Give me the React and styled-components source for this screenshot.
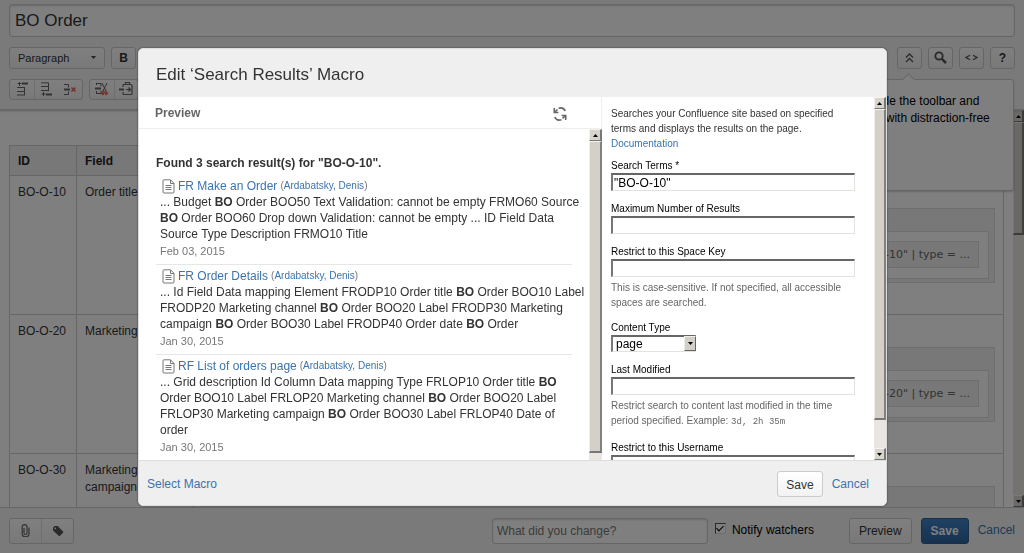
import styled, { createGlobalStyle } from 'styled-components'

const GlobalStyle = createGlobalStyle`
* { box-sizing: border-box; }
body {
  margin: 0;
  overflow: hidden;
  font-family: "Liberation Sans", Arial, sans-serif;
  font-size: 12px;
  line-height: 17px;
  color: #333;
}
button, input, select { font-family: inherit; font-size: 12px; color: inherit; }
`

/* ---------- shared ---------- */

const Link = styled.a`
color: #3b73af;
text-decoration: none;
`

const Button = styled.button`
height: 26px;
padding: 1px ${props => props.$pad || 9}px 0;
border: 1px solid ${props => props.$primary ? "#2e5f94" : "#ccc"};
border-radius: 3px;
background: ${props => props.$primary ? "linear-gradient(#4183c8, #2d64a0)" : "linear-gradient(#fff, #f2f2f2)"};
color: ${props => props.$primary ? "#fff" : "#333"};
font-weight: ${props => props.$primary ? "bold" : "normal"};
`

const ScrollTrack = styled.div`
width: ${props => props.$width}px;
flex: none;
display: flex;
flex-direction: column;
background-color: #e9e6e1;
`
const ScrollArrow = styled.div`
height: 12px;
flex: none;
display: flex;
align-items: center;
justify-content: center;
background-color: #d8d4cc;
border: 1px solid #f4f2ee;
border-right: 2px solid #777;
border-bottom: 1px solid #777;
`
const ScrollThumb = styled.div`
flex: ${props => props.$grow} 0 0;
background-color: #d4d0c8;
border-left: 1px solid #f0eeea;
border-right: 2px solid #808080;
border-top: 1px solid #f4f2ee;
border-bottom: 2px solid #777;
`
const ScrollRest = styled.div`
flex: ${props => props.$grow} 0 0;
`

const Scroll = ({ width, thumb, rest, noEnd }) => (
  <ScrollTrack $width={width} aria-hidden="true">
    <ScrollArrow>
      <svg width="5" height="3"><path d="M0 3L2.5 0L5 3z" fill="#000" /></svg>
    </ScrollArrow>
    <ScrollThumb $grow={thumb} />
    <ScrollRest $grow={rest} />
    {!noEnd && (
      <ScrollArrow>
        <svg width="5" height="3"><path d="M0 0L2.5 3L5 0z" fill="#000" /></svg>
      </ScrollArrow>
    )}
  </ScrollTrack>
)

/* ---------- editor page ---------- */

const Page = styled.div`
height: 100vh;
display: flex;
flex-direction: column;
background-color: #fff;
`
const Header = styled.header`
position: relative;
z-index: 1;
flex: none;
display: flex;
flex-direction: column;
gap: 10px;
height: 110px;
padding: 4px 9px 9px;
background-color: #f5f5f5;
border-bottom: 1px solid #ccc;
box-shadow: 0 1px 2px rgba(0, 0, 0, 0.25);
`
const TitleInput = styled.input`
width: 100%;
height: 34px;
padding: 0 5px;
border: 1px solid #ccc;
border-radius: 3px;
background-color: #fff;
box-shadow: inset 0 1px 2px rgba(0, 0, 0, 0.2);
font-size: 17px;
`
const ToolRow = styled.div`
display: flex;
gap: 6px;
height: 22px;
`
const Spacer = styled.div`
flex: 1;
`
const ToolGroup = styled.div`
display: flex;
border: 1px solid #ccc;
border-radius: 3px;
background: linear-gradient(#fff, #f2f2f2);
`
const Tool = styled.button`
width: ${props => props.$width || 24}px;
padding: 0;
border: 0;
border-left: ${props => props.$split ? "1px solid #ddd" : "0"};
background: none;
display: flex;
align-items: center;
justify-content: center;
font-weight: ${props => props.$bold ? "bold" : "normal"};
`
const StyleTool = styled(Tool)`
padding: 0 8px;
justify-content: space-between;
font-size: 11px;
`

const Hint = styled.div`
position: absolute;
top: 79px;
right: 10px;
width: 208px;
height: 112px;
padding: 13px 20px;
border: 1px solid #ccc;
border-radius: 3px;
background-color: #fff;
box-shadow: 0 1px 2px rgba(0, 0, 0, 0.2);
color: #000;
white-space: nowrap;

&::before {
  content: "";
  position: absolute;
  top: -5px;
  right: 100px;
  width: 8px;
  height: 8px;
  background-color: #fff;
  border-top: 1px solid #ccc;
  border-left: 1px solid #ccc;
  transform: rotate(45deg);
}
`

const Body = styled.div`
flex: 1;
min-height: 0;
display: flex;
`
const Document = styled.div`
flex: 1;
overflow: hidden;
padding: 35px 9px 0 9px;
`
const Table = styled.table`
width: 100%;
border-collapse: collapse;
table-layout: fixed;
`
const Th = styled.th`
width: ${props => props.$width || "auto"};
height: 30px;
padding: 7px 8px 5px;
text-align: left;
background-color: #f0f0f0;
border: 1px solid #ccc;
color: #222;
`
const Td = styled.td`
height: 139px;
padding: 8px 8px 7px;
vertical-align: top;
border: 1px solid #ccc;
`
const Macro = styled.div`
margin-top: 24px;
padding: 22px 5px 3px;
height: 75px;
background-color: #f0f0f0;
border: 1px solid #ddd;
`
const MacroBody = styled.div`
height: 48px;
padding: 9px;
background-color: #fff;
border: 1px solid #ddd;
`
const Placeholder = styled.div`
height: 27px;
padding: 0 8px;
line-height: 25px;
text-align: right;
font-family: "DejaVu Sans", sans-serif;
font-size: 11px;
color: #666;
background-color: #f0f0f0;
border: 1px solid #ddd;
`

const Footer = styled.footer`
flex: none;
height: 46px;
display: flex;
align-items: center;
padding: 0 9px;
background-color: #f5f5f5;
border-top: 1px solid #ccc;
`
const FooterGroup = styled(ToolGroup)`
height: 26px;
`
const Comment = styled.input`
width: 216px;
height: 26px;
padding: 0 4px;
border: 1px solid #ccc;
border-radius: 3px;
background-color: #fff;
box-shadow: inset 0 1px 2px rgba(0, 0, 0, 0.15);
&::placeholder { color: #777; }
`
const Watch = styled.label`
display: flex;
align-items: center;
gap: 6px;
margin: 0 35px 0 7px;
color: #000;
`
const Tick = styled.input`
appearance: none;
width: 11px;
height: 11px;
margin: 0 0 4px;
border: 1px solid #ddd;
border-top-color: #555;
border-left-color: #555;
background: #fff;
display: flex;
align-items: center;
justify-content: center;
&:checked::before {
  content: "";
  width: 3px;
  height: 6px;
  margin-bottom: 2px;
  border: solid #000;
  border-width: 0 1px 1px 0;
  transform: rotate(45deg);
}
`
const FooterActions = styled.div`
display: flex;
align-items: center;
gap: 9px;
`

/* ---------- dialog ---------- */

const Blanket = styled.div`
position: fixed;
inset: 0;
z-index: 10;
display: flex;
padding: 48px 137px 47px 138px;
background-color: rgba(0, 0, 0, 0.5);
`
const Dialog = styled.section`
flex: 1;
min-width: 0;
display: flex;
flex-direction: column;
overflow: hidden;
border: 1px solid #ddd;
border-radius: 5px;
background-color: #fff;
box-shadow: 0 0 2px rgba(0, 0, 0, 0.6);
`
const DialogHeader = styled.header`
flex: none;
height: 48px;
padding: 4px 17px 0;
display: flex;
align-items: center;
background-color: #efefef;
`
const DialogTitle = styled.h2`
margin: 0;
font-size: 17px;
line-height: 20px;
font-weight: normal;
`
const DialogBody = styled.div`
flex: 1;
min-height: 0;
display: flex;
`
const DialogFooter = styled.footer`
flex: none;
height: 45px;
display: flex;
align-items: center;
justify-content: space-between;
padding: 2px 17px 0 8px;
background-color: #efefef;
border-top: 1px solid #ddd;
`
const PreviewPane = styled.div`
flex: 1;
min-width: 0;
display: flex;
flex-direction: column;
`
const PreviewHeader = styled.div`
flex: none;
height: 32px;
display: flex;
align-items: center;
justify-content: space-between;
padding: 2px 34px 0 16px;
border-right: 1px solid #eee;
border-bottom: 1px solid #eee;
font-weight: bold;
color: #666;
`
const IconButton = styled.button`
display: flex;
padding: 0;
border: 0;
background: none;
`
const PreviewBody = styled.div`
flex: 1;
min-height: 0;
display: flex;
`
const Results = styled.div`
flex: 1;
min-width: 0;
overflow: hidden;
padding: 26px 17px 0;
`
const Found = styled.h3`
margin: 0 0 6px;
font-size: 12px;
line-height: 17px;
`
const Result = styled.article`
padding: 0 0 4px 4px;
margin-bottom: 3px;
border-bottom: 1px solid #e6e6e6;
line-height: 16px;
&:last-child { border: 0; }
`
const ResultTitle = styled.div`
display: flex;
align-items: center;
height: 16px;
padding-left: 2px;
gap: 3px;
`
const Author = styled.small`
font-size: 10px;
color: #777;
`
const Excerpt = styled.p`
margin: 0;
white-space: pre;
`
const ResultDate = styled.div`
font-size: 11px;
line-height: 18px;
color: #777;
`

const Params = styled.div`
flex: none;
width: 284px;
display: flex;
`
const Form = styled.form`
flex: 1;
min-width: 0;
overflow: hidden;
padding: 9px 19px 0 9px;
font-size: 10px;
line-height: 15px;
`
const About = styled.p`
margin: 0 0 7px;
`
const Field = styled.div`
margin-bottom: 10px;
`
const Label = styled.label`
display: block;
color: #000;
`
const sunken = `
border: 2px solid #e4e2dc;
border-top-color: #666;
border-left-color: #777;
border-right-width: 1px;
border-bottom-width: 1px;
border-radius: 0;
background-color: #fff;
color: #000;
`
const TextInput = styled.input`
display: block;
width: 100%;
height: 18px;
padding: 0 1px;
${sunken}
`
const SelectWrap = styled.div`
position: relative;
width: 85px;
`
const Select = styled.select`
display: block;
width: 100%;
height: 17px;
padding: 0 3px;
appearance: none;
${sunken}
`
const SelectArrow = styled.span`
position: absolute;
top: 1px;
right: 0;
width: 12px;
height: 15px;
display: flex;
align-items: center;
justify-content: center;
background-color: #d4d0c8;
border: 1px solid #eee;
border-right-color: #666;
border-bottom-color: #666;
pointer-events: none;
`
const Help = styled.div`
margin-top: 3px;
color: #666;
`
const Code = styled.code`
font-family: "Liberation Mono", monospace;
font-size: 9px;
`

/* ---------- icons ---------- */

const PageIcon = () => (
  <svg width="13" height="15" viewBox="0 0 13 15" fill="none" stroke="#777">
    <path d="M2 .8h6.5l3.5 3.6V13a1 1 0 0 1-1 1H2a1 1 0 0 1-1-1V1.8a1 1 0 0 1 1-1z" />
    <path d="M8.5 1v3.5H12M3.5 6.5h6M3.5 8.500h6M3.5 10.5h6" />
  </svg>
)

const RefreshIcon = () => (
  <svg width="14" height="14" viewBox="0 0 14 14" fill="none" stroke="#666" strokeWidth="1.600">
    <path d="M5.500 1.300C8.500.4 11.200 1.400 12.200 4M8.500 12.700C5.500 13.600 2.800 12.600 1.800 10M1.300 1v4.500H5.500M12.700 13V8.500H8.500" />
    <path d="M1.500 5.500L4.500 2.500M12.500 8.500L9.500 11.500" />
  </svg>
)

const InsertBefore = () => (
  <svg width="13" height="14" viewBox="0 0 13 14" fill="none" stroke="#666">
    <path d="M3.500 0v4M1.500 1.500h4" /><path d="M6 1.500h6" strokeWidth="2" />
    <path d="M1 5.500h7M1 9.500h7M1 13h7M8.500 5v8.500" />
  </svg>
)

const InsertAfter = () => (
  <svg width="13" height="14" viewBox="0 0 13 14" fill="none" stroke="#666">
    <path d="M1 .8h7M1 4.500h7M1 8.500h7M8.500 .5v8.500" />
    <path d="M3.500 10v4M1.500 12h4" /><path d="M6 12.500h6" strokeWidth="2" />
  </svg>
)

const DeleteRow = () => (
  <svg width="14" height="13" viewBox="0 0 14 13" fill="none" stroke="#666">
    <path d="M1 1.500h4.500v3M1 11.500h4.500v-3" /><path d="M1 6.500h6" strokeWidth="2" />
    <path d="M8.500 4.500l4 4M12.500 4.500l-4 4" stroke="#e06050" strokeWidth="1.500" />
  </svg>
)

const CutRow = () => (
  <svg width="14" height="14" viewBox="0 0 14 14" fill="none" stroke="#666">
    <path d="M1 1.500h5v3M1 11.500h5v-3M1.500 1v2M1.500 9v3M7 1l4 8M12 1L8 9" /><path d="M0 6.500h6" strokeWidth="2" />
    <path d="M8.500 8.500l-2 3 1.500 1L9.500 9.500M10.500 8.500l2 3-1.500 1L9.500 9.500" stroke="#e06050" strokeWidth="1.300" />
  </svg>
)

const PasteRow = () => (
  <svg width="15" height="14" viewBox="0 0 15 14" fill="none" stroke="#666" strokeWidth="1.200">
    <path d="M4 5V3.500a1 1 0 0 1 1-1h7a1 1 0 0 1 1 1v8a1 1 0 0 1-1 1H5a1 1 0 0 1-1-1V10M6.500 2.500v-2h4v2M7 7.500h4M9.500 5.500l2 2-2 2" />
    <path d="M0 7.500h5" strokeWidth="2" />
  </svg>
)

/* ---------- content ---------- */

const results = [
  {
    title: "FR Make an Order",
    date: "Feb 03, 2015",
    text: `... Budget *BO* Order BOO50 Text Validation: cannot be empty FRMO60 Source
*BO* Order BOO60 Drop down Validation: cannot be empty ... ID Field Data
Source Type Description FRMO10 Title`,
  },
  {
    title: "FR Order Details",
    date: "Jan 30, 2015",
    text: `... Id Field Data mapping Element FRODP10 Order title *BO* Order BOO10 Label
FRODP20 Marketing channel *BO* Order BOO20 Label FRODP30 Marketing
campaign *BO* Order BOO30 Label FRODP40 Order date *BO* Order`,
  },
  {
    title: "RF List of orders page",
    date: "Jan 30, 2015",
    text: `... Grid description Id Column Data mapping Type FRLOP10 Order title *BO*
Order BOO10 Label FRLOP20 Marketing channel *BO* Order BOO20 Label
FRLOP30 Marketing campaign *BO* Order BOO30 Label FRLOP40 Date of
order`,
  },
]

const rows = [
  { id: "BO-O-10", field: "Order title", macro: '"BO-O-10" | type = ...' },
  { id: "BO-O-20", field: "Marketing", macro: '"BO-O-20" | type = ...' },
  { id: "BO-O-30", field: "Marketing campaign" },
]

// every second piece stood between asterisks
const highlight = text => text.split("*").map((part, i) => i % 2 ? <b key={i}>{part}</b> : part)

const Editor = () => (
  <Page>
    <Header>
      <TitleInput aria-label="Page title" defaultValue="BO Order" />
      <ToolRow>
        <ToolGroup>
          <StyleTool $width={94}>
            Paragraph
            <svg width="5" height="3"><path d="M0 0h5L2.500 3z" fill="#444" /></svg>
          </StyleTool>
        </ToolGroup>
        <ToolGroup><Tool $bold $width={23}>B</Tool></ToolGroup>
        <Spacer />
        <ToolGroup>
          <Tool $width={23} aria-label="Hide toolbar">
            <svg width="9" height="10" fill="none" stroke="#555" strokeWidth="1.300"><path d="M1 4.500l3.500-3.500L8 4.500M1 9l3.500-3.500L8 9" /></svg>
          </Tool>
        </ToolGroup>
        <ToolGroup>
          <Tool $width={23} aria-label="Find">
            <svg width="13" height="13" fill="none" stroke="#555"><circle cx="5" cy="5" r="3.700" strokeWidth="1.800" /><path d="M7.800 7.800L12 12" strokeWidth="2.500" /></svg>
          </Tool>
        </ToolGroup>
        <ToolGroup>
          <Tool $width={23} aria-label="Source">
            <svg width="13" height="7" fill="none" stroke="#555" strokeWidth="1.300"><path d="M5 1.300L1 3.500l4 2.200M8 1.300l4 2.200-4 2.200" /></svg>
          </Tool>
        </ToolGroup>
        <ToolGroup><Tool $bold $width={23}>?</Tool></ToolGroup>
      </ToolRow>
      <ToolRow>
        <ToolGroup>
          <Tool aria-label="Insert row before"><InsertBefore /></Tool>
          <Tool $split aria-label="Insert row after"><InsertAfter /></Tool>
          <Tool aria-label="Delete row"><DeleteRow /></Tool>
        </ToolGroup>
        <ToolGroup>
          <Tool aria-label="Cut row"><CutRow /></Tool>
          <Tool $split aria-label="Paste row"><PasteRow /></Tool>
        </ToolGroup>
      </ToolRow>
      <Hint>
        You can hide the toolbar and<br />
        edit pages with distraction-free
      </Hint>
    </Header>
    <Body>
      <Document>
        <Table>
          <thead>
            <tr>
              <Th $width="67px">ID</Th>
              <Th $width="116px">Field</Th>
              <Th />
            </tr>
          </thead>
          <tbody>
            {rows.map(row => (
              <tr key={row.id}>
                <Td>{row.id}</Td>
                <Td>{row.field}</Td>
                <Td>
                  <Macro>
                    {row.macro && <MacroBody><Placeholder>{row.macro}</Placeholder></MacroBody>}
                  </Macro>
                </Td>
              </tr>
            ))}
          </tbody>
        </Table>
      </Document>
      <Scroll width={11} thumb={111} rest={262} />
    </Body>
    <Footer>
      <FooterGroup>
        <Tool $width={31} aria-label="Attachments">
          <svg width="9" height="13" fill="none" stroke="#666" strokeWidth="1.200"><path d="M3 4v5a1.500 1.500 0 0 0 3 0V3a2.200 2.200 0 0 0-4.800 0v6.500a3.300 3.300 0 0 0 6.800 0V3.500" /></svg>
        </Tool>
        <Tool $split $width={32} aria-label="Labels">
          <svg width="12" height="12"><path d="M1 2.500L2.500 1h3.200L11 6.500a1 1 0 0 1 0 1.200L8 10.800a1 1 0 0 1-1.300 0L1 5.500z" fill="#555" /><circle cx="3.300" cy="3.300" r=".9" fill="#f5f5f5" /></svg>
        </Tool>
      </FooterGroup>
      <Spacer />
      <Comment aria-label="What did you change?" placeholder="What did you change?" />
      <Watch><Tick type="checkbox" defaultChecked />Notify watchers</Watch>
      <FooterActions>
        <Button>Preview</Button>
        <Button $primary>Save</Button>
        <Link href="#cancel">Cancel</Link>
      </FooterActions>
    </Footer>
  </Page>
)

const MacroDialog = () => (
  <Dialog role="dialog" aria-labelledby="dialog-title">
    <DialogHeader>
      <DialogTitle id="dialog-title">Edit ‘Search Results’ Macro</DialogTitle>
    </DialogHeader>
    <DialogBody>
      <PreviewPane>
        <PreviewHeader>
          Preview
          <IconButton aria-label="Refresh"><RefreshIcon /></IconButton>
        </PreviewHeader>
        <PreviewBody>
          <Results>
            <Found>Found 3 search result(s) for "BO-O-10".</Found>
            {results.map(result => (
              <Result key={result.title}>
                <ResultTitle>
                  <PageIcon />
                  <Link href="#result">{result.title}</Link>
                  <Author>(<Link href="#author">Ardabatsky, Denis</Link>)</Author>
                </ResultTitle>
                <Excerpt>{highlight(result.text)}</Excerpt>
                <ResultDate>{result.date}</ResultDate>
              </Result>
            ))}
          </Results>
          <Scroll width={13} thumb={314} rest={7} noEnd />
        </PreviewBody>
      </PreviewPane>
      <Params>
        <Form>
          <About>
            Searches your Confluence site based on specified terms and displays the results on the page.<br />
            <Link href="#docs">Documentation</Link>
          </About>
          <Field>
            <Label htmlFor="terms">Search Terms *</Label>
            <TextInput id="terms" defaultValue={'"BO-O-10"'} />
          </Field>
          <Field>
            <Label htmlFor="max">Maximum Number of Results</Label>
            <TextInput id="max" />
          </Field>
          <Field>
            <Label htmlFor="space">Restrict to this Space Key</Label>
            <TextInput id="space" />
            <Help>This is case-sensitive. If not specified, all accessible spaces are searched.</Help>
          </Field>
          <Field>
            <Label htmlFor="type">Content Type</Label>
            <SelectWrap>
              <Select id="type" defaultValue="page">
                <option>page</option>
              </Select>
              <SelectArrow>
                <svg width="5" height="3"><path d="M0 0h5L2.500 3z" fill="#000" /></svg>
              </SelectArrow>
            </SelectWrap>
          </Field>
          <Field>
            <Label htmlFor="modified">Last Modified</Label>
            <TextInput id="modified" />
            <Help>Restrict search to content last modified in the time period specified. Example: <Code>3d, 2h 35m</Code></Help>
          </Field>
          <Field>
            <Label htmlFor="user">Restrict to this Username</Label>
            <TextInput id="user" />
          </Field>
        </Form>
        <Scroll width={12} thumb={313} rest={28} />
      </Params>
    </DialogBody>
    <DialogFooter>
      <Link href="#select">Select Macro</Link>
      <FooterActions>
        <Button $pad={8}>Save</Button>
        <Link href="#cancel">Cancel</Link>
      </FooterActions>
    </DialogFooter>
  </Dialog>
)

const App = () => {
  return (
    <>
      <GlobalStyle />
      <Editor />
      <Blanket>
        <MacroDialog />
      </Blanket>
    </>
  )
}

export default App
